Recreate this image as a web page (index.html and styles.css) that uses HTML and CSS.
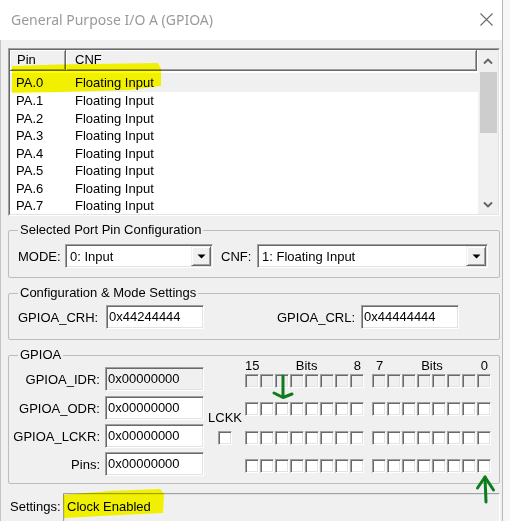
FILE: index.html
```html
<!DOCTYPE html>
<html>
<head>
<meta charset="utf-8">
<title>General Purpose I/O A (GPIOA)</title>
<link rel="stylesheet" href="styles.css">
</head>
<body>
<div class="window">
  <div class="titlebar">
    <span class="title">General Purpose I/O A (GPIOA)</span>
    <svg class="close" width="13" height="13" viewBox="0 0 13 13"><path d="M0.5 0.5L12.5 12.5M12.5 0.5L0.5 12.5" stroke="#6a6a6a" stroke-width="1.1" fill="none"/></svg>
  </div>
  <div class="client">
    <div class="listbox">
      <div class="list-inner">
        <div class="list-main">
          <div class="list-header">
            <div class="hcell hpin">Pin</div>
            <div class="hcell hcnf">CNF</div>
          </div>
          <div class="rows">
            <div class="row sel"><span class="c-pin">PA.0</span><span class="c-cnf">Floating Input</span></div>
            <div class="row"><span class="c-pin">PA.1</span><span class="c-cnf">Floating Input</span></div>
            <div class="row"><span class="c-pin">PA.2</span><span class="c-cnf">Floating Input</span></div>
            <div class="row"><span class="c-pin">PA.3</span><span class="c-cnf">Floating Input</span></div>
            <div class="row"><span class="c-pin">PA.4</span><span class="c-cnf">Floating Input</span></div>
            <div class="row"><span class="c-pin">PA.5</span><span class="c-cnf">Floating Input</span></div>
            <div class="row"><span class="c-pin">PA.6</span><span class="c-cnf">Floating Input</span></div>
            <div class="row"><span class="c-pin">PA.7</span><span class="c-cnf">Floating Input</span></div>
          </div>
        </div>
        <div class="vscroll">
          <div class="sb-btn up"><svg width="10" height="7" viewBox="0 0 10 7"><path d="M1 5.5L5 1.5L9 5.5" stroke="#606060" stroke-width="1.8" fill="none"/></svg></div>
          <div class="sb-track"><div class="sb-thumb"></div></div>
          <div class="sb-btn down"><svg width="10" height="7" viewBox="0 0 10 7"><path d="M1 1.5L5 5.5L9 1.5" stroke="#606060" stroke-width="1.8" fill="none"/></svg></div>
        </div>
      </div>
    </div>

    <fieldset class="group g-sel">
      <legend>Selected Port Pin Configuration</legend>
      <div class="sel-row">
        <span class="lbl lbl-mode">MODE:</span>
        <div class="combo combo-mode"><span class="combo-text">0: Input</span><span class="combo-btn"><svg width="9" height="5" viewBox="0 0 9 5"><path d="M0.5 0.5H8.5L4.5 4.5Z" fill="#000"/></svg></span></div>
        <span class="lbl lbl-cnf">CNF:</span>
        <div class="combo combo-cnf"><span class="combo-text">1: Floating Input</span><span class="combo-btn"><svg width="9" height="5" viewBox="0 0 9 5"><path d="M0.5 0.5H8.5L4.5 4.5Z" fill="#000"/></svg></span></div>
      </div>
    </fieldset>

    <fieldset class="group g-cfg">
      <legend>Configuration &amp; Mode Settings</legend>
      <div class="cfg-row">
        <span class="lbl lbl-crh">GPIOA_CRH:</span>
        <div class="field w98">0x44244444</div>
        <span class="lbl lbl-crl">GPIOA_CRL:</span>
        <div class="field w98">0x44444444</div>
      </div>
    </fieldset>

    <fieldset class="group g-gpio">
      <legend>GPIOA</legend>
      <div class="gpio-body">
        <div class="regs">
          <div class="reg-row"><span class="reg-lbl">GPIOA_IDR:</span><div class="field reg ro">0x00000000</div></div>
          <div class="reg-row r2"><span class="reg-lbl">GPIOA_ODR:</span><div class="field reg">0x00000000</div></div>
          <div class="reg-row"><span class="reg-lbl">GPIOA_LCKR:</span><div class="field reg">0x00000000</div></div>
          <div class="reg-row"><span class="reg-lbl">Pins:</span><div class="field reg">0x00000000</div></div>
        </div>
        <div class="lckk">
          <span class="lckk-lbl">LCKK</span>
          <span class="cb"></span>
        </div>
        <div class="bits b-hi">
          <div class="bits-head"><span>15</span><span>Bits</span><span>8</span></div>
          <div class="cb-row ro"><span class="cb"></span><span class="cb"></span><span class="cb"></span><span class="cb"></span><span class="cb"></span><span class="cb"></span><span class="cb"></span><span class="cb"></span></div>
          <div class="cb-row r2"><span class="cb"></span><span class="cb"></span><span class="cb"></span><span class="cb"></span><span class="cb"></span><span class="cb"></span><span class="cb"></span><span class="cb"></span></div>
          <div class="cb-row r3"><span class="cb"></span><span class="cb"></span><span class="cb"></span><span class="cb"></span><span class="cb"></span><span class="cb"></span><span class="cb"></span><span class="cb"></span></div>
          <div class="cb-row"><span class="cb"></span><span class="cb"></span><span class="cb"></span><span class="cb"></span><span class="cb"></span><span class="cb"></span><span class="cb"></span><span class="cb"></span></div>
        </div>
        <div class="bits b-lo">
          <div class="bits-head"><span>7</span><span>Bits</span><span>0</span></div>
          <div class="cb-row ro"><span class="cb"></span><span class="cb"></span><span class="cb"></span><span class="cb"></span><span class="cb"></span><span class="cb"></span><span class="cb"></span><span class="cb"></span></div>
          <div class="cb-row r2"><span class="cb"></span><span class="cb"></span><span class="cb"></span><span class="cb"></span><span class="cb"></span><span class="cb"></span><span class="cb"></span><span class="cb"></span></div>
          <div class="cb-row r3"><span class="cb"></span><span class="cb"></span><span class="cb"></span><span class="cb"></span><span class="cb"></span><span class="cb"></span><span class="cb"></span><span class="cb"></span></div>
          <div class="cb-row"><span class="cb"></span><span class="cb"></span><span class="cb"></span><span class="cb"></span><span class="cb"></span><span class="cb"></span><span class="cb"></span><span class="cb"></span></div>
        </div>
      </div>
    </fieldset>

    <div class="settings-row">
      <span class="set-lbl">Settings:</span>
      <div class="set-field">Clock Enabled</div>
    </div>
  </div>
</div>

<svg class="annot" width="510" height="521" viewBox="0 0 510 521">
  <g class="marker">
    <polygon points="12,66 60,64.5 158,63 161,69 161,86 130,90 60,92 12,93"/>
    <polygon points="63,495 110,491 160,489 164,494 163,513 120,515 64,518"/>
  </g>
  <g fill="none" stroke="#0c7c1c" stroke-width="3" stroke-linecap="round" stroke-linejoin="round">
    <path d="M283 376L283 396"/>
    <path d="M274 393L283 397.5L292 394"/>
    <path d="M486 502L485 477"/>
    <path d="M477.5 488L485 477L493.5 490"/>
  </g>
</svg>
</body>
</html>
```
FILE: styles.css
```css
* { box-sizing: border-box; }
html, body { margin: 0; padding: 0; }
body {
  width: 510px;
  height: 521px;
  overflow: hidden;
  position: relative;
  background: #f7f7f7;
  font-family: "Liberation Sans", Arial, sans-serif;
  font-size: 13px;
  color: #000;
}
.window {
  width: 503px;
  height: 521px;
  border-right: 1px solid #b8b8b8;
  display: flex;
  flex-direction: column;
}
.titlebar {
  height: 40px;
  flex: none;
  background: #fff;
  display: flex;
  align-items: center;
  justify-content: space-between;
  padding: 0 9px 0 11px;
}
.title {
  font-family: "Noto Sans", "Open Sans", sans-serif;
  font-size: 14px;
  color: #9a9a9a;
  margin-top: -1px;
}
.close { display: block; margin-top: -1px; }

.client {
  flex: 1;
  background: #f0f0f0;
  border-left: 1px solid #c4c4c4;
  padding: 8px 2px 0 7px;
}

/* list view */
.listbox {
  height: 168px;
  border: 1px solid;
  border-color: #a0a0a0 #fff #fff #a0a0a0;
}
.list-inner {
  height: 100%;
  display: flex;
  border: 1px solid;
  border-color: #696969 #e3e3e3 #e3e3e3 #696969;
  background: #fff;
}
.list-main {
  width: 468px;
  overflow: hidden;
}
.list-header {
  display: flex;
  height: 21px;
}
.hcell {
  height: 21px;
  line-height: 20px;
  background: #f0f0f0;
  border-right: 1px solid #696969;
  border-bottom: 1px solid #696969;
  box-shadow: inset 1px 1px 0 #fff, inset -1px -1px 0 #a0a0a0;
}
.hpin { width: 56px; padding-left: 7px; }
.hcnf { flex: 1; padding-left: 9px; margin-right: 1px; }
.rows { padding-top: 2px; }
.row {
  display: flex;
  height: 17.5px;
  line-height: 17.5px;
  white-space: nowrap;
}
.row.sel {
  height: 19px;
  line-height: 19px;
  background: #f0f0f0;
}
.c-pin { width: 56px; padding-left: 6px; }
.c-cnf { padding-left: 9px; }

.vscroll {
  width: 20px;
  display: flex;
  flex-direction: column;
  background: #f0f0f0;
}
.sb-btn {
  display: flex;
  align-items: center;
  justify-content: center;
}
.sb-btn svg { display: block; }
.sb-btn.up { height: 22px; padding-top: 1px; }
.sb-btn.down { height: 20px; }
.sb-track { flex: 1; }
.sb-thumb {
  height: 61px;
  margin: 0 1px 0 2px;
  background: #cdcdcd;
}

/* group boxes */
.group {
  margin: 0;
  padding: 0;
  min-width: 0;
  border: 1px solid #bdbdbd;
  border-radius: 2px;
}
.group legend {
  margin-left: 9px;
  padding: 0 2px;
  line-height: 16px;
}
.g-sel { margin-top: 6px; padding-top: 6px; padding-bottom: 9px; }
.g-cfg { margin-top: 7px; padding-top: 4px; padding-bottom: 10px; }
.g-gpio { margin-top: 7px; padding-top: 4px; padding-bottom: 7px; }

.lbl { white-space: nowrap; }
.sel-row {
  display: flex;
  align-items: center;
  height: 24px;
  padding-left: 9px;
}
.lbl-mode { width: 47px; }
.lbl-cnf { width: 36px; margin-left: 8px; }
.combo {
  height: 24px;
  display: flex;
  align-items: center;
  justify-content: space-between;
  background: #fff;
  border: 1px solid;
  border-color: #a0a0a0 #fff #fff #a0a0a0;
  box-shadow: inset 1px 1px 0 #696969, inset -1px -1px 0 #e3e3e3;
  padding: 1px;
}
.combo-mode { width: 148px; }
.combo-cnf { width: 231px; }
.combo-text { padding-left: 3px; white-space: nowrap; }
.combo-btn {
  width: 20px;
  height: 20px;
  display: flex;
  align-items: center;
  justify-content: center;
  background: #f0f0f0;
  border: 1px solid;
  border-color: #f0f0f0 #696969 #696969 #f0f0f0;
  box-shadow: inset 1px 1px 0 #fff, inset -1px -1px 0 #a0a0a0;
}
.combo-btn svg { display: block; }

.cfg-row {
  display: flex;
  align-items: center;
  height: 24px;
  padding-left: 9px;
}
.lbl-crh { width: 88px; }
.lbl-crl { width: 84px; margin-left: 73px; }

.field {
  height: 24px;
  line-height: 22px;
  padding-left: 2px;
  white-space: nowrap;
  background: #fff;
  border: 1px solid;
  border-color: #a0a0a0 #fff #fff #a0a0a0;
  box-shadow: inset 1px 1px 0 #696969, inset -1px -1px 0 #e3e3e3;
}
.w98 { width: 98px; }

/* GPIOA group */
.gpio-body {
  display: flex;
  align-items: flex-start;
}
.regs { width: 195px; }
.reg-row {
  display: flex;
  align-items: center;
  height: 24px;
  margin-top: 4px;
}
.reg-row:first-child { margin-top: 0; }
.reg-row.r2 { margin-top: 5px; }
.reg-lbl {
  width: 96px;
  padding-right: 5px;
  text-align: right;
  white-space: nowrap;
}
.field.reg { width: 99px; }
.field.ro { background: #f0f0f0; }

.lckk {
  width: 41px;
  display: flex;
  flex-direction: column;
  align-items: center;
}
.lckk-lbl {
  line-height: 16px;
  margin-top: 43px;
  margin-left: 1px;
}
.lckk .cb { margin-top: 5px; margin-left: 1px; }

.cb {
  display: block;
  width: 14px;
  height: 14px;
  background: #fff;
  border: 1px solid;
  border-color: #a0a0a0 #fff #fff #a0a0a0;
  box-shadow: inset 1px 1px 0 #696969, inset -1px -1px 0 #e3e3e3;
}
.bits {
  width: 120px;
  margin-top: -9px;
}
.b-lo { margin-left: 7px; }
.bits-head {
  display: flex;
  justify-content: space-between;
  line-height: 16px;
  height: 16px;
}
.b-hi .bits-head { padding-right: 4px; }
.b-lo .bits-head { padding: 0 4px; }
.cb-row {
  display: flex;
  gap: 1px;
  margin-top: 14px;
}
.bits-head + .cb-row { margin-top: 0; }
.cb-row.r3 { margin-top: 15px; }
.cb-row.ro .cb { background: #f0f0f0; }

/* settings */
.settings-row {
  display: flex;
  align-items: flex-start;
  margin-top: 9px;
  padding-left: 2px;
}
.set-lbl {
  width: 53px;
  line-height: 16px;
  padding-top: 6px;
}
.set-field {
  flex: 1;
  height: 40px;
  padding: 5px 0 0 3px;
  line-height: 16px;
  background: #f0f0f0;
  border: 1px solid;
  border-color: #a0a0a0 #fff #fff #a0a0a0;
  box-shadow: inset 1px 1px 0 #e3e3e3;
}

/* annotations drawn over the screenshot */
.annot {
  position: absolute;
  left: 0;
  top: 0;
  pointer-events: none;
}
.marker {
  fill: #ffff00;
  mix-blend-mode: multiply;
}
```
